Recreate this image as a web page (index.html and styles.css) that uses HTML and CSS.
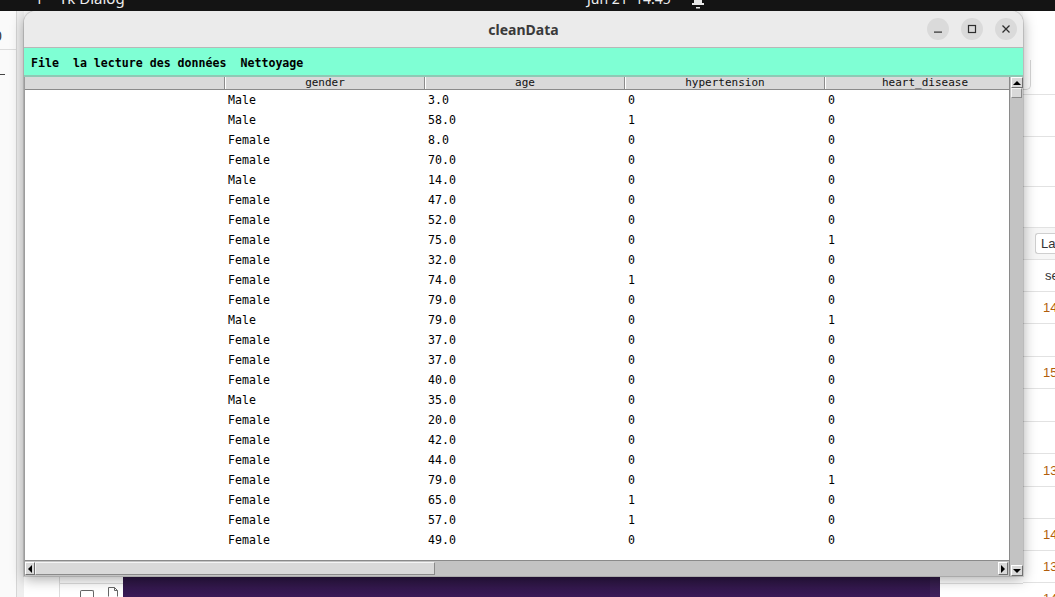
FILE: index.html
```html
<!DOCTYPE html>
<html>
<head>
<meta charset="utf-8">
<title>cleanData</title>
<link rel="stylesheet" href="styles.css">
</head>
<body>
<div class="screen">
  <div class="topbar">
    <div class="tb-left">
      <span class="tb-icon">ʔ</span>
      <span class="tb-app">Tk Dialog</span>
    </div>
    <span class="tb-clock">Jun 21  14:45</span>
    <svg class="tb-bell" width="14" height="11" viewBox="0 0 14 11"><rect x="1" y="3" width="12" height="2" fill="#e8e8e8"/><rect x="3" y="0" width="8" height="3" fill="#e8e8e8"/><rect x="5" y="7" width="4" height="1.5" fill="#e8e8e8"/></svg>
  </div>
  <div class="desktop">
    <div class="bg-left">
      <div class="bl-main">
        <div class="bl-top"><span class="bl-char">0</span></div>
        <div class="bl-dash"></div>
      </div>
      <div class="bl-side"></div>
    </div>
    <div class="bg-mid">
      <div class="bm-fill"></div>
      <div class="bm-bottom">
        <div class="bmb-a"></div>
        <div class="bmb-b">
          <div class="bmb-line"></div>
          <div class="bmb-icons">
            <span class="ic-check"></span>
            <svg class="ic-doc" width="12" height="10" viewBox="0 0 12 10"><path d="M1.5 9.5V0.5H7.5L10.5 3.5V9.5" fill="none" stroke="#666" stroke-width="1"/><path d="M7.5 0.5V3.5H10.5" fill="none" stroke="#666" stroke-width="1"/></svg>
          </div>
        </div>
        <div class="bmb-purple"><div class="bmb-purple-edge"></div></div>
        <div class="bmb-right"><div class="bmb-rline"></div></div>
      </div>
    </div>
    <div class="bg-right">
      <div class="br-top"><div class="br-box"></div></div>
      <div class="br-row h42"></div>
      <div class="br-row h50"></div>
      <div class="br-row h41"></div>
      <div class="br-tool"><div class="br-input">La</div></div>
      <div class="br-row h32 head">se</div>
      <div class="br-row h32 num">14</div>
      <div class="br-row h33"></div>
      <div class="br-row h32 num">15</div>
      <div class="br-row h33"></div>
      <div class="br-row h32"></div>
      <div class="br-row h33 num">13</div>
      <div class="br-row h32"></div>
      <div class="br-row h32 num">14</div>
      <div class="br-row h32 num">13</div>
      <div class="br-row h32 num">14</div>
    </div>

    <div class="window">
      <div class="titlebar">
        <div></div>
        <div class="title">cleanData</div>
        <div class="controls">
          <span class="ctl"><svg width="10" height="10" viewBox="0 0 10 10"><rect x="1" y="7.5" width="8" height="1.2" fill="#2e2e2e"/></svg></span>
          <span class="ctl"><svg width="10" height="10" viewBox="0 0 10 10"><rect x="1.5" y="1.5" width="7" height="7" fill="none" stroke="#2e2e2e" stroke-width="1.2"/></svg></span>
          <span class="ctl"><svg width="10" height="10" viewBox="0 0 10 10"><path d="M1.5 1.5L8.5 8.5M8.5 1.5L1.5 8.5" stroke="#2e2e2e" stroke-width="1.3"/></svg></span>
        </div>
      </div>
      <div class="menubar">
        <span class="mitem">File</span>
        <span class="mitem">la lecture des données</span>
        <span class="mitem">Nettoyage</span>
      </div>
      <div class="content">
        <div class="main">
          <div class="table">
            <div class="thead">
              <div class="th"></div>
              <div class="th">gender</div>
              <div class="th">age</div>
              <div class="th">hypertension</div>
              <div class="th">heart_disease</div>
            </div>
            <div class="tbody">
              <div class="tr"><div class="td"></div><div class="td">Male</div><div class="td">3.0</div><div class="td">0</div><div class="td">0</div></div>
              <div class="tr"><div class="td"></div><div class="td">Male</div><div class="td">58.0</div><div class="td">1</div><div class="td">0</div></div>
              <div class="tr"><div class="td"></div><div class="td">Female</div><div class="td">8.0</div><div class="td">0</div><div class="td">0</div></div>
              <div class="tr"><div class="td"></div><div class="td">Female</div><div class="td">70.0</div><div class="td">0</div><div class="td">0</div></div>
              <div class="tr"><div class="td"></div><div class="td">Male</div><div class="td">14.0</div><div class="td">0</div><div class="td">0</div></div>
              <div class="tr"><div class="td"></div><div class="td">Female</div><div class="td">47.0</div><div class="td">0</div><div class="td">0</div></div>
              <div class="tr"><div class="td"></div><div class="td">Female</div><div class="td">52.0</div><div class="td">0</div><div class="td">0</div></div>
              <div class="tr"><div class="td"></div><div class="td">Female</div><div class="td">75.0</div><div class="td">0</div><div class="td">1</div></div>
              <div class="tr"><div class="td"></div><div class="td">Female</div><div class="td">32.0</div><div class="td">0</div><div class="td">0</div></div>
              <div class="tr"><div class="td"></div><div class="td">Female</div><div class="td">74.0</div><div class="td">1</div><div class="td">0</div></div>
              <div class="tr"><div class="td"></div><div class="td">Female</div><div class="td">79.0</div><div class="td">0</div><div class="td">0</div></div>
              <div class="tr"><div class="td"></div><div class="td">Male</div><div class="td">79.0</div><div class="td">0</div><div class="td">1</div></div>
              <div class="tr"><div class="td"></div><div class="td">Female</div><div class="td">37.0</div><div class="td">0</div><div class="td">0</div></div>
              <div class="tr"><div class="td"></div><div class="td">Female</div><div class="td">37.0</div><div class="td">0</div><div class="td">0</div></div>
              <div class="tr"><div class="td"></div><div class="td">Female</div><div class="td">40.0</div><div class="td">0</div><div class="td">0</div></div>
              <div class="tr"><div class="td"></div><div class="td">Male</div><div class="td">35.0</div><div class="td">0</div><div class="td">0</div></div>
              <div class="tr"><div class="td"></div><div class="td">Female</div><div class="td">20.0</div><div class="td">0</div><div class="td">0</div></div>
              <div class="tr"><div class="td"></div><div class="td">Female</div><div class="td">42.0</div><div class="td">0</div><div class="td">0</div></div>
              <div class="tr"><div class="td"></div><div class="td">Female</div><div class="td">44.0</div><div class="td">0</div><div class="td">0</div></div>
              <div class="tr"><div class="td"></div><div class="td">Female</div><div class="td">79.0</div><div class="td">0</div><div class="td">1</div></div>
              <div class="tr"><div class="td"></div><div class="td">Female</div><div class="td">65.0</div><div class="td">1</div><div class="td">0</div></div>
              <div class="tr"><div class="td"></div><div class="td">Female</div><div class="td">57.0</div><div class="td">1</div><div class="td">0</div></div>
              <div class="tr"><div class="td"></div><div class="td">Female</div><div class="td">49.0</div><div class="td">0</div><div class="td">0</div></div>
            </div>
          </div>
          <div class="hscroll">
            <div class="sb-btn"><span class="tri tri-left"></span></div>
            <div class="h-slider"></div>
            <div class="sb-trough"></div>
            <div class="sb-btn"><span class="tri tri-right"></span></div>
          </div>
        </div>
        <div class="vscroll">
          <div class="sb-btn v"><span class="tri tri-up"></span></div>
          <div class="v-slider"></div>
          <div class="sb-trough"></div>
          <div class="sb-btn v"><span class="tri tri-down"></span></div>
        </div>
      </div>
    </div>
  </div>
</div>
</body>
</html>
```
FILE: styles.css
```css
* { box-sizing: border-box; }
html, body { margin: 0; padding: 0; }
body {
  width: 1055px;
  height: 597px;
  overflow: hidden;
  background: #ffffff;
  font-family: "Liberation Sans", Arial, sans-serif;
}
.screen {
  width: 1055px;
  height: 597px;
  display: flex;
  flex-direction: column;
  overflow: hidden;
}

/* ---------- top bar ---------- */
.topbar {
  height: 11px;
  flex: none;
  background: #141414;
  color: #eeeeee;
  display: flex;
  align-items: flex-start;
  overflow: hidden;
  font-family: "Noto Sans", sans-serif;
  font-size: 15px;
  line-height: 15px;
}
.tb-left {
  width: 587px;
  flex: none;
  display: flex;
}
.tb-icon { margin-left: 37px; margin-top: -9px; width: 9px; font-size: 14px; }
.tb-app { margin-left: 13px; margin-top: -9px; }
.tb-clock { margin-top: -9px; font-size: 14px; white-space: pre; }
.tb-bell { margin-left: 20px; flex: none; }

/* ---------- desktop background ---------- */
.desktop {
  flex: 1;
  position: relative;
  display: flex;
  overflow: hidden;
}
.bg-left {
  width: 24px;
  flex: none;
  display: flex;
}
.bl-main {
  width: 17px;
  background: #fafafa;
  border-right: 1px solid #d6d6d6;
  display: flex;
  flex-direction: column;
}
.bl-top {
  height: 39px;
  border-bottom: 1px solid #dcdcdc;
  overflow: hidden;
  display: flex;
  align-items: flex-end;
}
.bl-char {
  margin-left: -6px;
  font-size: 14px;
  line-height: 18px;
  color: #333;
  margin-bottom: 4px;
}
.bl-dash {
  width: 5px;
  height: 1px;
  background: #444;
  margin-top: 24px;
}
.bl-side {
  flex: 1;
  background: #efefef;
}
.bg-mid {
  flex: 1;
  display: flex;
  flex-direction: column;
  background: #fafafa;
}
.bm-fill { flex: 1; }
.bm-bottom {
  height: 20px;
  flex: none;
  display: flex;
  background: #ffffff;
}
.bmb-a {
  width: 36px;
  border-right: 1px solid #dddddd;
}
.bmb-b {
  width: 63px;
  display: flex;
  flex-direction: column;
}
.bmb-line {
  height: 7px;
  border-bottom: 1px solid #dddddd;
}
.bmb-icons {
  flex: 1;
  display: flex;
  align-items: flex-end;
  padding-left: 20px;
  gap: 13px;
}
.ic-check {
  width: 14px;
  height: 7px;
  border: 1.5px solid #666;
  border-bottom: none;
  border-radius: 2px 2px 0 0;
}
.ic-doc { margin-bottom: 0; }
.bmb-purple {
  width: 817px;
  background: linear-gradient(#2a1540, #3b1a58);
  display: flex;
  justify-content: flex-end;
}
.bmb-purple-edge {
  width: 10px;
  background: rgba(255, 255, 255, 0.03);
}
.bmb-right {
  flex: 1;
  background: #ffffff;
}
.bmb-rline {
  height: 7px;
  border-bottom: 1px solid #e0e0e0;
}

.bg-right {
  width: 32px;
  flex: none;
  background: #ffffff;
  display: flex;
  flex-direction: column;
  font-family: "Liberation Sans", Arial, sans-serif;
  font-size: 13px;
}
.br-top {
  height: 84px;
  flex: none;
  border-bottom: 1px solid #e2e2e2;
  padding-top: 49px;
}
.br-box {
  width: 8px;
  height: 30px;
  border: 1px solid #d6d6d6;
  border-left: none;
  border-top: none;
  border-radius: 0 0 5px 0;
}
.br-row {
  flex: none;
  border-bottom: 1px solid #e2e2e2;
  display: flex;
  align-items: center;
  padding-left: 20px;
  color: #222;
}
.h41 { height: 41px; }
.h42 { height: 42px; }
.h50 { height: 50px; }
.h32 { height: 32px; }
.h33 { height: 33px; }
.br-row.head { padding-left: 22px; color: #333; }
.br-row.num { color: #b05e0c; }
.br-tool {
  height: 32px;
  flex: none;
  background: #f6f6f6;
  border-bottom: 1px solid #e2e2e2;
  display: flex;
  align-items: center;
  padding-left: 12px;
}
.br-input {
  height: 21px;
  width: 30px;
  background: #ffffff;
  border: 1px solid #cfcfcf;
  border-right: none;
  border-radius: 3px 0 0 3px;
  padding-left: 5px;
  line-height: 19px;
  color: #333;
}

/* ---------- window ---------- */
.window {
  position: absolute;
  left: 24px;
  top: 0;
  width: 999px;
  height: 565px;
  border-radius: 12px 12px 0 0;
  background: #ebebeb;
  box-shadow: 0 0 0 1px rgba(0, 0, 0, 0.12), 0 3px 14px rgba(0, 0, 0, 0.35);
  display: flex;
  flex-direction: column;
  overflow: hidden;
}
.titlebar {
  height: 37px;
  flex: none;
  background: #ebebeb;
  border-bottom: 1px solid #b8b8b8;
  display: grid;
  grid-template-columns: 1fr auto 1fr;
  align-items: center;
}
.title {
  font-family: "Noto Sans", sans-serif;
  font-weight: 700;
  font-size: 14px;
  color: #3a3a3a;
  padding-top: 1px;
}
.controls {
  display: flex;
  justify-content: flex-end;
  gap: 12px;
  padding-right: 6px;
}
.ctl {
  width: 22px;
  height: 22px;
  border-radius: 50%;
  background: #dadada;
  display: flex;
  align-items: center;
  justify-content: center;
}
.menubar {
  height: 29px;
  flex: none;
  background: #7fffd4;
  border-bottom: 2px solid #8fc9b5;
  display: flex;
  align-items: center;
  font-family: "DejaVu Sans Mono", monospace;
  font-weight: 700;
  font-size: 11.6px;
  color: #000;
  padding-top: 2px;
}
.mitem {
  padding: 0 7px;
  white-space: pre;
}
.content {
  flex: 1;
  display: flex;
  min-height: 0;
  border-left: 1px solid #9c9c9c;
  background: #ffffff;
}
.main {
  flex: 1;
  min-width: 0;
  display: flex;
  flex-direction: column;
}
.table {
  flex: 1;
  min-height: 0;
  overflow: hidden;
  background: #ffffff;
  font-family: "DejaVu Sans Mono", monospace;
  font-size: 11.6px;
  color: #000;
}
.thead {
  display: flex;
  height: 13px;
  background: #d9d9d9;
  border-bottom: 1px solid #8a8a8a;
}
.th {
  width: 200px;
  flex: none;
  height: 12px;
  border-left: 1px solid #ffffff;
  border-right: 1px solid #8c8c8c;
  text-align: center;
  font-size: 11px;
  line-height: 11px;
  color: #111;
}
.th:first-child { border-left: none; }
.tr {
  display: flex;
  height: 20px;
}
.td {
  width: 200px;
  flex: none;
  padding-left: 3px;
  line-height: 20px;
  white-space: pre;
}
.hscroll {
  height: 16px;
  flex: none;
  display: flex;
  background: #c3c3c3;
  border-top: 1px solid #8a8a8a;
  padding: 1px 1px 1px 0;
}
.vscroll {
  width: 14px;
  flex: none;
  display: flex;
  flex-direction: column;
  background: #c3c3c3;
  border-left: 1px solid #8a8a8a;
  padding: 0 1px 0 1px;
}
.sb-btn {
  width: 10px;
  flex: none;
  background: #d9d9d9;
  border-top: 1px solid #ffffff;
  border-left: 1px solid #ffffff;
  border-right: 1px solid #707070;
  border-bottom: 1px solid #707070;
  display: flex;
  align-items: center;
  justify-content: center;
}
.sb-btn.v {
  width: 12px;
  height: 11px;
}
.h-slider {
  width: 400px;
  flex: none;
  background: #d9d9d9;
  border-top: 1px solid #f4f4f4;
  border-left: 1px solid #f4f4f4;
  border-right: 1px solid #8a8a8a;
  border-bottom: 1px solid #8a8a8a;
}
.v-slider {
  height: 10px;
  flex: none;
  background: #d9d9d9;
  border-top: 1px solid #f4f4f4;
  border-left: 1px solid #f4f4f4;
  border-right: 1px solid #8a8a8a;
  border-bottom: 1px solid #8a8a8a;
}
.sb-trough { flex: 1; }
.tri { width: 0; height: 0; display: block; }
.tri-left { border-top: 4px solid transparent; border-bottom: 4px solid transparent; border-right: 4px solid #000; }
.tri-right { border-top: 4px solid transparent; border-bottom: 4px solid transparent; border-left: 4px solid #000; }
.tri-up { border-left: 4px solid transparent; border-right: 4px solid transparent; border-bottom: 4px solid #000; }
.tri-down { border-left: 4px solid transparent; border-right: 4px solid transparent; border-top: 4px solid #000; }
```
